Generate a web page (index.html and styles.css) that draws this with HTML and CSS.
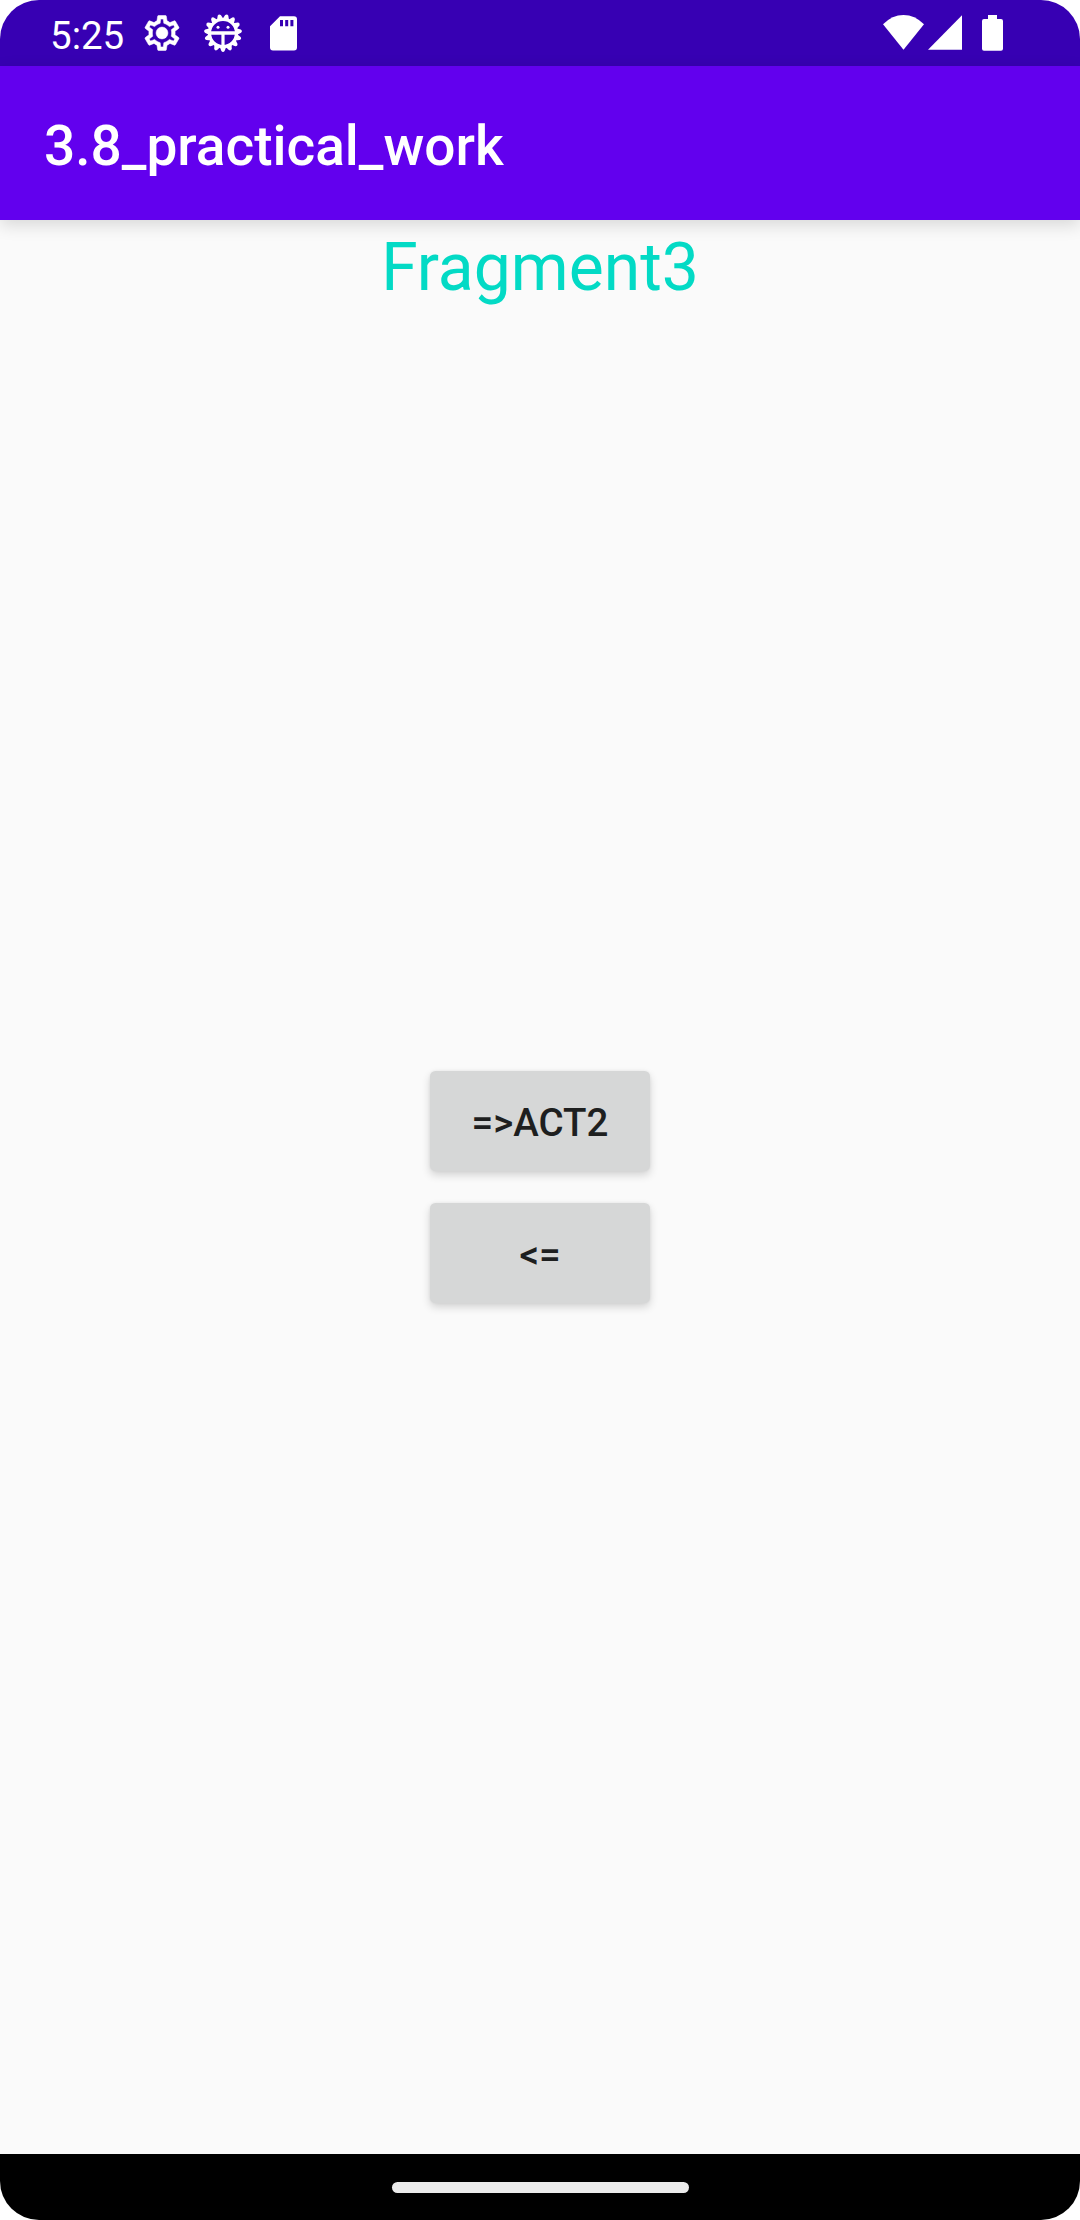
FILE: index.html
```html
<!DOCTYPE html>
<html lang="en">
<head>
<meta charset="utf-8">
<title>3.8_practical_work</title>
<link rel="stylesheet" href="styles.css">
</head>
<body>
<div class="screen">
  <header class="status-bar">
    <span class="clock">5:25</span>
    <svg class="icon-gear" viewBox="0 0 24 24"><path fill-rule="evenodd" d="M19.43 12.98c.04-.32.07-.64.07-.98s-.03-.66-.07-.98l2.11-1.65c.19-.15.24-.42.12-.64l-2-3.46c-.09-.16-.26-.25-.44-.25-.06 0-.12.01-.17.03l-2.49 1c-.52-.4-1.08-.73-1.69-.98l-.38-2.65C14.46 2.18 14.25 2 14 2h-4c-.25 0-.46.18-.49.42l-.38 2.65c-.61.25-1.17.59-1.69.98l-2.49-1c-.06-.02-.12-.03-.18-.03-.17 0-.34.09-.43.25l-2 3.46c-.13.22-.07.49.12.64l2.11 1.65c-.04.32-.07.65-.07.98s.03.66.07.98l-2.11 1.65c-.19.15-.24.42-.12.64l2 3.46c.09.16.26.25.44.25.06 0 .12-.01.17-.03l2.49-1c.52.4 1.08.73 1.69.98l.38 2.65c.03.24.24.42.49.42h4c.25 0 .46-.18.49-.42l.38-2.65c.61-.25 1.17-.59 1.69-.98l2.49 1c.06.02.12.03.18.03.17 0 .34-.09.43-.25l2-3.46c.12-.22.07-.49-.12-.64l-2.11-1.65zm-1.98-1.71c.04.31.05.52.05.73 0 .21-.02.43-.05.73l-.14 1.13.89.7 1.08.84-.7 1.21-1.27-.51-1.04-.42-.9.68c-.43.32-.84.56-1.25.73l-1.06.43-.16 1.13-.2 1.35h-1.4l-.19-1.35-.16-1.13-1.06-.43c-.43-.18-.83-.41-1.23-.71l-.91-.7-1.06.43-1.27.51-.7-1.21 1.08-.84.89-.7-.14-1.13c-.03-.31-.05-.54-.05-.74s.02-.43.05-.73l.14-1.13-.89-.7-1.08-.84.7-1.21 1.27.51 1.04.42.9-.68c.43-.32.84-.56 1.25-.73l1.06-.43.16-1.13.2-1.35h1.39l.19 1.35.16 1.13 1.06.43c.43.18.83.41 1.23.71l.91.7 1.06-.43 1.27-.51.7 1.21-1.07.85-.89.7.14 1.13z"/><circle cx="12" cy="12" r="3.4"/></svg>
    <svg class="icon-debug" viewBox="-20 -20 40 40">
      <defs><path id="tooth" d="M-3.4 13.5L-1.6 18Q0 20 1.6 18L3.4 13.5Z"/></defs>
      <circle class="ring" r="13.5"/>
      <path d="M-13-1.8H13V1.8H1.6V13H-1.6V1.8H-13Z"/>
      <circle cx="-5" cy="-5.7" r="1.5"/><circle cx="5" cy="-5.7" r="1.5"/>
      <use href="#tooth"/><use href="#tooth" transform="rotate(24)"/><use href="#tooth" transform="rotate(48)"/><use href="#tooth" transform="rotate(72)"/><use href="#tooth" transform="rotate(96)"/><use href="#tooth" transform="rotate(120)"/><use href="#tooth" transform="rotate(144)"/><use href="#tooth" transform="rotate(168)"/><use href="#tooth" transform="rotate(192)"/><use href="#tooth" transform="rotate(216)"/><use href="#tooth" transform="rotate(240)"/><use href="#tooth" transform="rotate(264)"/><use href="#tooth" transform="rotate(288)"/><use href="#tooth" transform="rotate(312)"/><use href="#tooth" transform="rotate(336)"/>
    </svg>
    <svg class="icon-sd" viewBox="0 0 27 35"><path fill-rule="evenodd" d="M10 .2H24Q27 .2 27 3.2V31.5Q27 34.5 24 34.5H3Q0 34.5 0 31.5V10.2ZM10 4V10.3H13V4ZM15.2 4V10.3H18.2V4ZM20.4 4V10.3H23.4V4Z"/></svg>
    <div class="system-icons">
      <svg class="icon-wifi" viewBox="0 0 41 35"><path d="M20.5 34.7L0 9.3Q9.2 0 20.5 0T41 9.3Z"/></svg>
      <svg class="icon-signal" viewBox="0 0 34 35"><path d="M34 .2V34.7H0Z"/></svg>
      <svg class="icon-battery" viewBox="0 0 21 36"><path d="M6 0H15V4H19Q21 4 21 6V33.7Q21 35.7 19 35.7H2Q0 35.7 0 33.7V6Q0 4 2 4H6Z"/></svg>
    </div>
  </header>
  <div class="app-bar"><h1 class="app-title">3.8_practical_work</h1></div>
  <main class="content">
    <h2 class="fragment-title">Fragment3</h2>
    <div class="actions">
      <button class="action">=&gt;ACT2</button>
      <button class="action">&lt;=</button>
    </div>
  </main>
  <footer class="nav-bar"><div class="home-handle"></div></footer>
</div>
</body>
</html>
```

FILE: styles.css
```css
* { box-sizing: border-box; }

body {
  margin: 0;
  background: #fff;
  font-family: Roboto, "Liberation Sans", sans-serif;
}

.screen {
  display: flex;
  flex-direction: column;
  width: 1080px;
  height: 2220px;
  overflow: hidden;
  border-radius: 39px;
  background: #fafafa;
}

.status-bar {
  display: flex;
  align-items: flex-start;
  flex: none;
  height: 66px;
  padding: 0 77px 0 50px;
  background: #3700b3;
  color: #fff;
}

.status-bar svg { flex: none; fill: #fff; }

.clock {
  width: 90.5px;
  padding-top: 13px;
  font-size: 38.5px;
  line-height: 45px;
}

.icon-gear { width: 42px; height: 42px; margin-top: 12.3px; stroke: #fff; stroke-width: 0.3; }
.icon-debug { width: 40px; height: 40px; margin: 13px 0 0 20px; }
.icon-sd { width: 27px; height: 35px; margin: 16px 0 0 27.5px; }
.ring { fill: none; stroke: #fff; stroke-width: 3.2; }

.system-icons { display: flex; margin: 15px 0 0 auto; }
.icon-wifi { width: 41px; height: 35px; }
.icon-signal { width: 34px; height: 35px; margin: 0 20px 0 4px; }
.icon-battery { width: 21px; height: 36px; }

.app-bar {
  display: flex;
  align-items: center;
  flex: none;
  height: 154px;
  padding: 6px 44px 0;
  background: #6200ee;
  box-shadow: 0 5px 16px rgba(0, 0, 0, 0.14);
}

.app-title {
  margin: 0;
  color: #fff;
  font-size: 55px;
  font-weight: 500;
  line-height: 64px;
}

.content {
  display: flex;
  flex-direction: column;
  align-items: center;
  flex: 1;
}

.fragment-title {
  margin: 9px 0 0;
  color: #03dac5;
  font-size: 66px;
  font-weight: 400;
  line-height: 78px;
}

.actions {
  display: flex;
  flex-direction: column;
  gap: 32px;
  margin-top: 764px;
}

.action {
  width: 220px;
  height: 100px;
  padding: 3px 0 0;
  border: 0;
  border-radius: 5.5px;
  background: #d6d7d7;
  box-shadow: 0 4px 8px rgba(0, 0, 0, 0.16), 0 0 3px rgba(0, 0, 0, 0.06);
  color: #1e1f1f;
  font: 500 38.5px/45px Roboto, "Liberation Sans", sans-serif;
}

.nav-bar {
  display: flex;
  justify-content: center;
  flex: none;
  height: 66px;
  padding-top: 27.5px;
  background: #000;
}

.home-handle {
  width: 297px;
  height: 11px;
  border-radius: 5.5px;
  background: #ebebeb;
}
```
